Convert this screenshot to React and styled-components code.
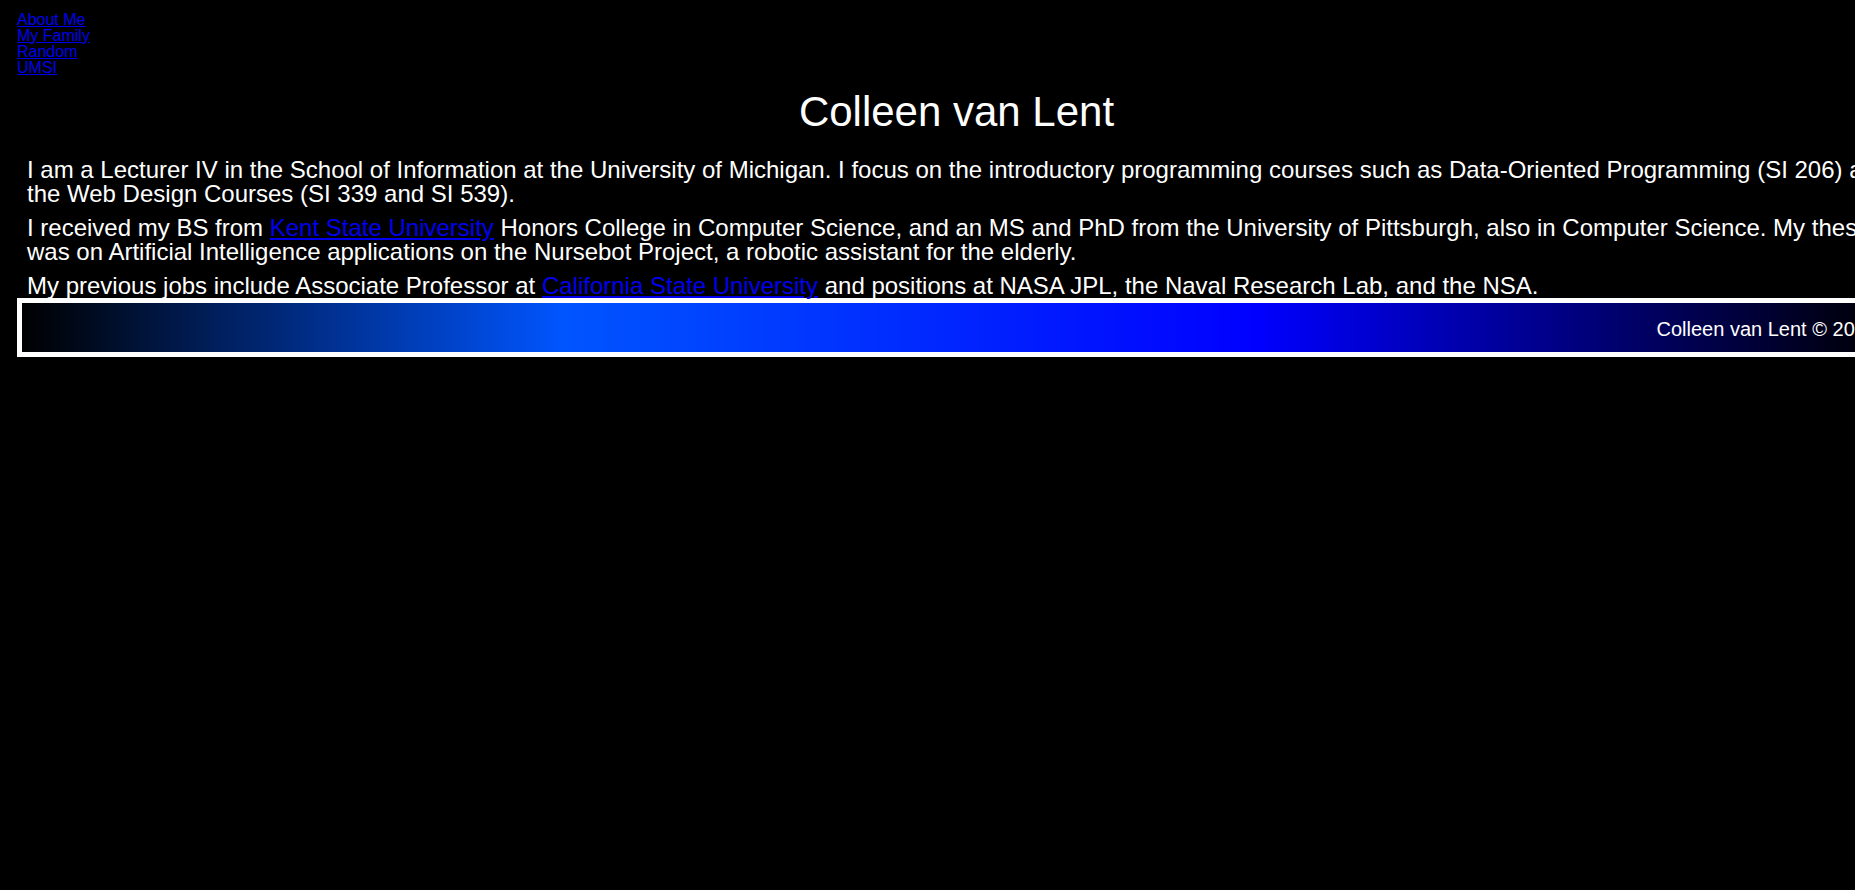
import React from "react";
import styled, { createGlobalStyle } from "styled-components";

const Global = createGlobalStyle`
  html, body {
    margin: 0;
    padding: 0;
    background: #000;
    overflow-x: hidden;
  }
  body {
    font-family: "Liberation Sans", Arial, sans-serif;
    color: #fff;
  }
`;

const Page = styled.div`
  width: 1879px;
  margin-left: 17px;
  padding-top: 12px;
`;

const Nav = styled.nav`
  display: flex;
  flex-direction: column;
  align-items: flex-start;
  font-size: 16px;
  line-height: 16px;
`;

const NavLink = styled.a`
  color: #0000ee;
  text-decoration: underline;
`;

const Title = styled.h1`
  margin: 15px 0 0;
  font-size: 42px;
  line-height: 42px;
  font-weight: normal;
  text-align: center;
  color: #fff;
`;

const Main = styled.main`
  display: flex;
  flex-direction: column;
  gap: 10px;
  width: 1885px;
  margin-top: 25px;
  padding-left: 10px;
`;

const Para = styled.p`
  margin: 0;
  font-size: 24px;
  line-height: 24px;
  color: #fff;
`;

const InlineLink = styled.a`
  color: #0000ee;
  text-decoration: underline;
`;

const Footer = styled.footer`
  border: 5px solid #fff;
  background: linear-gradient(to right, #000 0%, #0055ff 29%, #0000ff 66%, #000 100%);
  padding: 15px 14px 11px;
  font-size: 20px;
  line-height: 23px;
  text-align: right;
  color: #fff;
`;

export default function App() {
  return (
    <>
      <Global />
      <Page>
        <Nav>
          <NavLink href="#about">About Me</NavLink>
          <NavLink href="#family">My Family</NavLink>
          <NavLink href="#random">Random</NavLink>
          <NavLink href="#umsi">UMSI</NavLink>
        </Nav>
        <Title>Colleen van Lent</Title>
        <Main>
          <Para>
            I am a Lecturer IV in the School of Information at the University of Michigan. I focus on the
            introductory programming courses such as Data-Oriented Programming (SI 206) and the Web Design
            Courses (SI 339 and SI 539).
          </Para>
          <Para>
            I received my BS from <InlineLink href="#kent">Kent State University</InlineLink> Honors College in
            Computer Science, and an MS and PhD from the University of Pittsburgh, also in Computer Science. My
            thesis was on Artificial Intelligence applications on the Nursebot Project, a robotic assistant for
            the elderly.
          </Para>
          <Para>
            My previous jobs include Associate Professor at{" "}
            <InlineLink href="#csu">California State University</InlineLink> and positions at NASA JPL, the Naval
            Research Lab, and the NSA.
          </Para>
        </Main>
        <Footer>Colleen van Lent © 2023</Footer>
      </Page>
    </>
  );
}
